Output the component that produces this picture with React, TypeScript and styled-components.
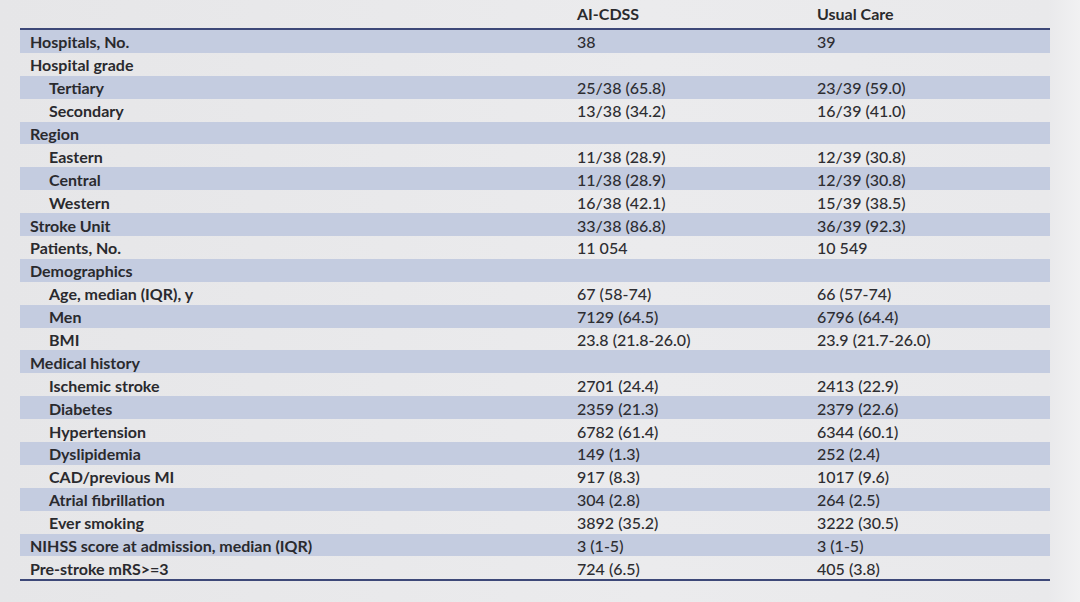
import styled, { createGlobalStyle } from "styled-components";

const GlobalStyle = createGlobalStyle`
  html, body {
    margin: 0;
    padding: 0;
    background: #e8e8ea;
  }
  body {
    font-family: Lato, "Open Sans", "Liberation Sans", sans-serif;
    color: #2e2e30;
  }
`;

const Slide = styled.div`
  width: 1080px;
  height: 602px;
  box-sizing: border-box;
  padding: 0 30px 0 20px;
  background: linear-gradient(90deg, #e6e6e8 0%, #ebebed 60%, #e9e9eb 97%, #f1f1f2 100%);
`;

const Table = styled.div`
  display: grid;
  grid-template-columns: 557px 240px 1fr;
  border-bottom: 2px solid #3d4878;
`;

const HeadRow = styled.div`
  display: contents;
`;

const HeadCell = styled.div`
  height: 30px;
  box-sizing: border-box;
  padding-top: 4px;
  font-size: 16px;
  font-weight: 700;
  color: #2a2a2d;
  border-bottom: 2px solid #3d4878;
`;

const Row = styled.div<{ $shaded: boolean }>`
  display: contents;
  & > div {
    background: ${(p) => (p.$shaded ? "#c4cce0" : "transparent")};
  }
`;

const LabelCell = styled.div<{ $indent: boolean }>`
  height: 22.9px;
  box-sizing: border-box;
  display: flex;
  align-items: center;
  padding-top: 1px;
  padding-left: ${(p) => (p.$indent ? "29px" : "10px")};
  font-size: 16px;
  font-weight: 700;
  color: #2a2a2e;
  white-space: nowrap;
`;

const ValueCell = styled.div`
  height: 22.9px;
  box-sizing: border-box;
  display: flex;
  align-items: center;
  padding-top: 1px;
  font-size: 16px;
  font-weight: 500;
  color: #2e2e32;
  white-space: nowrap;
`;

type Item = { label: string; indent?: boolean; ai?: string; usual?: string };

const rows: Item[] = [
  { label: "Hospitals, No.", ai: "38", usual: "39" },
  { label: "Hospital grade" },
  { label: "Tertiary", indent: true, ai: "25/38 (65.8)", usual: "23/39 (59.0)" },
  { label: "Secondary", indent: true, ai: "13/38 (34.2)", usual: "16/39 (41.0)" },
  { label: "Region" },
  { label: "Eastern", indent: true, ai: "11/38 (28.9)", usual: "12/39 (30.8)" },
  { label: "Central", indent: true, ai: "11/38 (28.9)", usual: "12/39 (30.8)" },
  { label: "Western", indent: true, ai: "16/38 (42.1)", usual: "15/39 (38.5)" },
  { label: "Stroke Unit", ai: "33/38 (86.8)", usual: "36/39 (92.3)" },
  { label: "Patients, No.", ai: "11 054", usual: "10 549" },
  { label: "Demographics" },
  { label: "Age, median (IQR), y", indent: true, ai: "67 (58-74)", usual: "66 (57-74)" },
  { label: "Men", indent: true, ai: "7129 (64.5)", usual: "6796 (64.4)" },
  { label: "BMI", indent: true, ai: "23.8 (21.8-26.0)", usual: "23.9 (21.7-26.0)" },
  { label: "Medical history" },
  { label: "Ischemic stroke", indent: true, ai: "2701 (24.4)", usual: "2413 (22.9)" },
  { label: "Diabetes", indent: true, ai: "2359 (21.3)", usual: "2379 (22.6)" },
  { label: "Hypertension", indent: true, ai: "6782 (61.4)", usual: "6344 (60.1)" },
  { label: "Dyslipidemia", indent: true, ai: "149 (1.3)", usual: "252 (2.4)" },
  { label: "CAD/previous MI", indent: true, ai: "917 (8.3)", usual: "1017 (9.6)" },
  { label: "Atrial fibrillation", indent: true, ai: "304 (2.8)", usual: "264 (2.5)" },
  { label: "Ever smoking", indent: true, ai: "3892 (35.2)", usual: "3222 (30.5)" },
  { label: "NIHSS score at admission, median (IQR)", ai: "3 (1-5)", usual: "3 (1-5)" },
  { label: "Pre-stroke mRS>=3", ai: "724 (6.5)", usual: "405 (3.8)" },
];

export default function App() {
  return (
    <>
      <GlobalStyle />
      <Slide>
        <Table>
          <HeadRow>
            <HeadCell />
            <HeadCell>AI-CDSS</HeadCell>
            <HeadCell>Usual Care</HeadCell>
          </HeadRow>
          {rows.map((r, i) => (
            <Row key={r.label} $shaded={i % 2 === 0}>
              <LabelCell $indent={!!r.indent}>{r.label}</LabelCell>
              <ValueCell>{r.ai ?? ""}</ValueCell>
              <ValueCell>{r.usual ?? ""}</ValueCell>
            </Row>
          ))}
        </Table>
      </Slide>
    </>
  );
}
